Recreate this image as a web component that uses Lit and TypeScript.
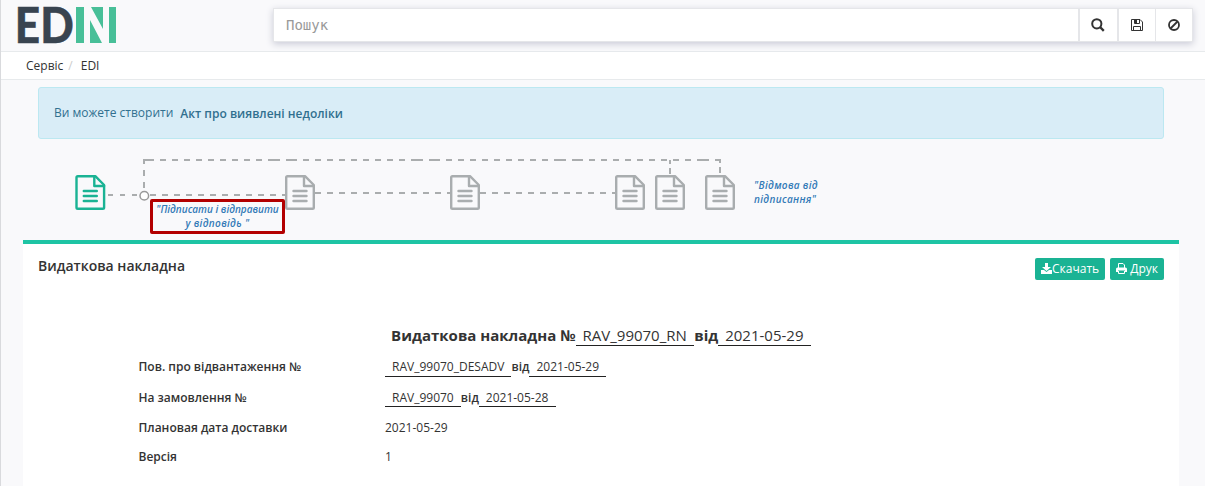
import { LitElement, html, svg, css } from "lit";
import { customElement } from "lit/decorators.js";

/** Document positions on the workflow canvas. */
const docs = [
  { x: 75.3, done: true },
  { x: 285, done: false },
  { x: 450, done: false },
  { x: 615, done: false },
  { x: 655, done: false },
  { x: 705, done: false },
];

@customElement("doc-flow")
export class DocFlow extends LitElement {
  static styles = css`
    :host { display: block; position: relative; height: 101px; }
    svg { display: block; }
    .line { stroke: #aaadae; stroke-width: 2; fill: none; }
    .doc { fill: none; stroke: #a9adaf; stroke-width: 2.4; stroke-linejoin: round; stroke-linecap: round; }
    .doc.done { stroke: #1ab394; }
    .note { position: absolute; font-size: 10px; line-height: 14px; font-style: italic; font-weight: 600; color: #337ab7; text-align: center; white-space: nowrap; }
    .sign { left: 150px; top: 60px; width: 135px; height: 35px; box-sizing: border-box; border: 3px solid #b30000; border-radius: 2px; }
    .refuse { left: 754px; top: 39px; text-align: left; }
    .refuse, .wide { letter-spacing: 0.33px; }
  `;
  render() {
    return html`
      <svg width="1205" height="101" viewBox="0 139 1205 101">
        <path class="line" stroke-dasharray="5 7" d="M108 195H139" />
        <path class="line" stroke-dasharray="6 6" d="M150 195H285" />
        <path class="line" stroke-dasharray="6 6" d="M315 193H450M480 193H615" />
        <path class="line" stroke-dasharray="6 6" d="M144 188V160" />
        <path class="line" stroke-dasharray="11 6 6 6 6 6 6 6 6 6 6 6 6 6 6 6 6 6 6 6 12 6" d="M143 160H720" />
        <path class="line" stroke-dasharray="4 4 6 4" d="M670 160V175M720 159V175" />
        <circle cx="144.3" cy="195.7" r="4.3" fill="#fff" stroke="#999" stroke-width="1.5" />
        ${docs.map(
          (d) => svg`<g class=${d.done ? "doc done" : "doc"} transform="translate(${d.x} 175)">
            <path d="M2.5 1.2H20L28.8 10V32.5Q28.8 33.8 27.5 33.8H2.5Q1.2 33.8 1.2 32.5V2.5Q1.2 1.2 2.5 1.2Z" />
            <path d="M19 1.2V11H28.8M8.5 16H21.5M8.5 21H21.5M8.5 26H21.5" />
          </g>`
        )}
      </svg>
      <div class="note sign">"Підписати і відправити<br /><span class="wide">у відповідь "</span></div>
      <div class="note refuse">"Відмова від<br />підписання"</div>
    `;
  }
}

@customElement("app-root")
export class AppRoot extends LitElement {
  static styles = css`
    :host { display: block; height: 486px; overflow: hidden; box-sizing: border-box; border-left: 1px solid #d9dadd; background: #f9f9fb; color: #333; font: 12px/17px "Open Sans", sans-serif; }
    .top { display: flex; height: 51px; box-sizing: border-box; padding: 8px 12px 0 16px; justify-content: space-between; }
    .logo { display: block; margin-top: -4px; overflow: visible; }
    .search { display: flex; width: 920px; height: 34px; box-sizing: border-box; border: 1px solid #e5e6e9; background: #fff; box-shadow: 0 2px 7px #c9cad6; }
    .field { flex: 1; padding-left: 12px; font: 14px/32px "DejaVu Sans Mono", monospace; color: #999; }
    .tool { width: 36px; border-left: 1px solid #e5e6e9; display: grid; place-items: center; }
    .tool.wide { width: 36.5px; border-left-width: 2px; }
    .crumbs { display: flex; height: 29px; box-sizing: border-box; border: solid #e7eaec; border-width: 1px 0; background: #fff; padding: 5px 25px; }
    .slash { color: #ccc; padding: 0 8px 0 5px; }
    .alert { height: 52px; box-sizing: border-box; margin: 7px 41px 0 37px; border: 1px solid #bce8f1; border-radius: 3px; background: #d9edf7; color: #31708f; padding: 16px 15px; display: flex; gap: 7px; }
    .alert b { font-weight: 600; padding-top: 1px; }
    doc-flow { margin-left: -1px; }
    .panel { margin: 0 26px 0 22px; height: 246px; box-sizing: border-box; border-top: 4px solid #1ec4a4; background: #fff; padding: 14px 15px; }
    .head { display: flex; align-items: flex-start; }
    .title { flex: 1; font-size: 14px; line-height: 16px; font-weight: 600; }
    .btn { display: flex; align-items: center; height: 22px; box-sizing: border-box; background: #1ab394; color: #fff; border-radius: 2px; margin-left: 5px; padding: 0 6px 1px; white-space: pre; }
    .main { margin-top: 45px; text-align: center; font-size: 15px; line-height: 20px; height: 23px; }
    .main b { font-weight: 700; }
    u { display: inline-block; text-decoration: none; border-bottom: 1px solid #222; padding: 0 7px; }
    .main u { padding-right: 7.4px; }
    .rows { display: grid; grid-template-columns: 246.5px 1fr; grid-template-rows: 31px 30px 29px 29px; padding: 10px 0 0 100.5px; }
    .rows b { font-weight: 600; }
    .rows u { line-height: 18px; padding-right: 7.1px; }
    .rows .raised u { line-height: 17px; }
  `;
  render() {
    return html`
      <div class="top">
        <svg class="logo" width="100" height="40" viewBox="17 4 100 40" role="img" aria-label="EDIN">
          <text x="14.8" y="42.7" textLength="59" lengthAdjust="spacingAndGlyphs" font-family="Lato" font-weight="900" font-size="49" fill="#394450" stroke="#394450" stroke-width=".4">ED</text>
          <g fill="#48bf98">
            <rect x="76" y="7" width="8" height="36" />
            <path d="M91 7H103V29ZM90 20L102 43H90Z" />
            <rect x="109" y="7" width="7" height="36" />
          </g>
        </svg>
        <div class="search">
          <div class="field">Пошук</div>
          <div class="tool wide"><svg width="14" height="14" viewBox="0 0 14 14" fill="none" stroke="#333"><circle cx="5.8" cy="5.8" r="4.6" stroke-width="2" /><path d="M9 9L12.8 12.8" stroke-width="2.4" /></svg></div>
          <div class="tool wide"><svg width="12" height="12" viewBox="0 0 12 12" fill="none" stroke="#333"><path d="M.5 .5H9L11.5 3V11.5H.5ZM2.5 11V7.5H9.5V11M3.5 1V4.5H8.5V1" /><path d="M4 1H6V4H4Z" fill="#333" stroke="none"/></svg></div>
          <div class="tool"><svg width="12" height="12" viewBox="0 0 12 12" fill="none" stroke="#333" stroke-width="1.8"><circle cx="6" cy="6" r="5" /><path d="M9.5 2.5L2.5 9.5" /></svg></div>
        </div>
      </div>
      <div class="crumbs"><span>Сервіс</span><span class="slash">/</span><span>EDI</span></div>
      <div class="alert"><span>Ви можете створити</span><b>Акт про виявлені недоліки</b></div>
      <doc-flow></doc-flow>
      <div class="panel">
        <div class="head">
          <div class="title">Видаткова накладна</div>
          <div class="btn"><svg width="11" height="11" viewBox="0 0 11 11" fill="#fff"><path d="M4 0H7V4H10L5.5 8L1 4H4ZM0 7H3L5.5 9L8 7H11V11H0Z" /></svg>Скачать</div>
          <div class="btn"><svg width="11" height="11" viewBox="0 0 11 11"><path d="M2.5 5V.5H7L8.5 2V5M2.5 8V10.5H8.5V8" fill="none" stroke="#fff"/><path d="M1.5 4.5H9.5Q11 4.5 11 6V9H9V7.5H2V9H0V6Q0 4.5 1.5 4.5Z" fill="#fff"/></svg> Друк</div>
        </div>
        <div class="main"><b>Видаткова накладна №</b><u>RAV_99070_RN</u><b>від</b><u>2021-05-29</u></div>
        <div class="rows">
          <b>Пов. про відвантаження №</b><span><u>RAV_99070_DESADV</u><b>від</b><u>2021-05-29</u></span>
          <b>На замовлення №</b><span class="raised"><u>RAV_99070</u><b>від</b><u>2021-05-28</u></span>
          <b>Плановая дата доставки</b><span>2021-05-29</span>
          <b>Версія</b><span>1</span>
        </div>
      </div>
    `;
  }
}
